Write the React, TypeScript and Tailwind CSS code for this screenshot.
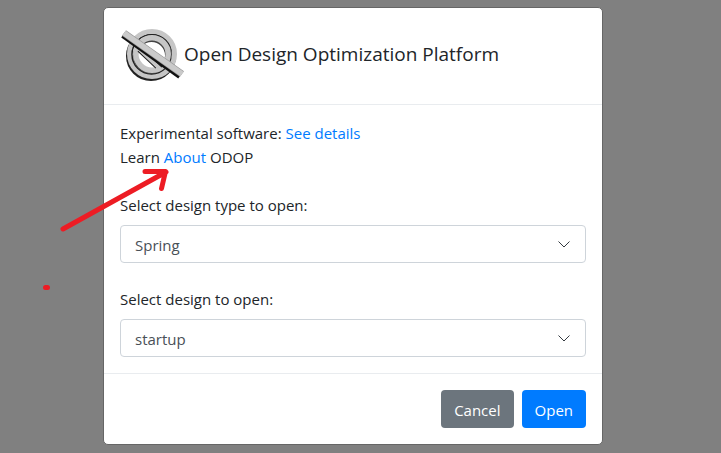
import React from "react";

function Logo() {
  return (
    <svg viewBox="0 0 64 64" className="size-16 shrink-0" fill="none" aria-hidden="true">
      <circle cx="31" cy="32" r="23" stroke="#222" strokeWidth="4" />
      <circle cx="32" cy="30" r="22.5" stroke="#c6c6c6" strokeWidth="5" />
      <circle cx="31.500" cy="30.500" r="19.500" stroke="#222" strokeWidth="1.5" />
      <circle cx="31.500" cy="31.500" r="16" stroke="#444" strokeWidth="5" />
      <circle cx="32" cy="30" r="16.200" stroke="#c6c6c6" strokeWidth="5.500" />
      <path d="M18 27L36 44" stroke="#222" strokeWidth="1.5" />
      <path d="M19 24L40 44" stroke="#c6c6c6" strokeWidth="5" />
      <path d="M21 23L42 43" stroke="#222" strokeWidth="1.5" />
      <path d="M3 11L60 52" stroke="#111" strokeWidth="6" />
      <path d="M4 9L62 50" stroke="#999" strokeWidth="7" />
      <path d="M4 9L62 50" stroke="#cacaca" strokeWidth="5.500" />
    </svg>
  );
}

function Field({ id, label, value }: { id: string; label: string; value: string }) {
  return (
    <div>
      <label htmlFor={id} className="mb-2 block">{label}</label>
      <div className="relative">
        <select
          id={id}
          className="block h-[38px] w-full appearance-none rounded border border-[#ced4da] bg-white px-[14px] pt-[2px] text-[#495057]"
        >
          <option>{value}</option>
        </select>
        <svg viewBox="0 0 16 16" className="pointer-events-none absolute right-[14px] top-[11px] size-4" fill="none" stroke="#343a40" aria-hidden="true">
          <path d="M2.500 5.500L8 11L13.500 5.500" />
        </svg>
      </div>
    </div>
  );
}

export default function App() {
  return (
    <main className="relative min-h-screen bg-[#808080] pt-[7px] pr-[15px] font-['Open_Sans','Noto_Sans',sans-serif] text-[15px] leading-6 text-[#212529]">
      <section role="dialog" aria-labelledby="title" className="mx-auto max-w-[500px] rounded-[5px] border border-[#666] bg-white">
        <header className="flex items-center border-b border-[#e9ecef] p-4">
          <Logo />
          <h1 id="title" className="pb-1 text-[19px] leading-[30px]">Open Design Optimization Platform</h1>
        </header>
        <div className="flex flex-col gap-6 p-4">
          <p>
            Experimental software: <a href="#details" className="text-[#007bff]">See details</a>
            <br />
            Learn <a href="#about" className="text-[#007bff]">About</a> ODOP
          </p>
          <Field id="type" label="Select design type to open:" value="Spring" />
          <Field id="design" label="Select design to open:" value="startup" />
        </div>
        <footer className="flex justify-end gap-2 border-t border-[#e9ecef] p-4 text-white">
          <button type="button" className="h-[38px] rounded bg-[#6c757d] px-[13px] pt-[2px]">Cancel</button>
          <button type="button" className="h-[38px] rounded bg-[#007bff] px-[13px] pt-[2px]">Open</button>
        </footer>
      </section>
      <svg viewBox="0 0 130 125" className="pointer-events-none absolute left-10 top-[167px] h-[125px] w-[130px]" fill="none" stroke="#ed1c24" strokeWidth="5" strokeLinecap="round" strokeLinejoin="round" aria-hidden="true">
        <path d="M23 62L126 5M105 4.500H125.500L121.500 21.500M5.500 120.500H7.500" />
      </svg>
    </main>
  );
}
